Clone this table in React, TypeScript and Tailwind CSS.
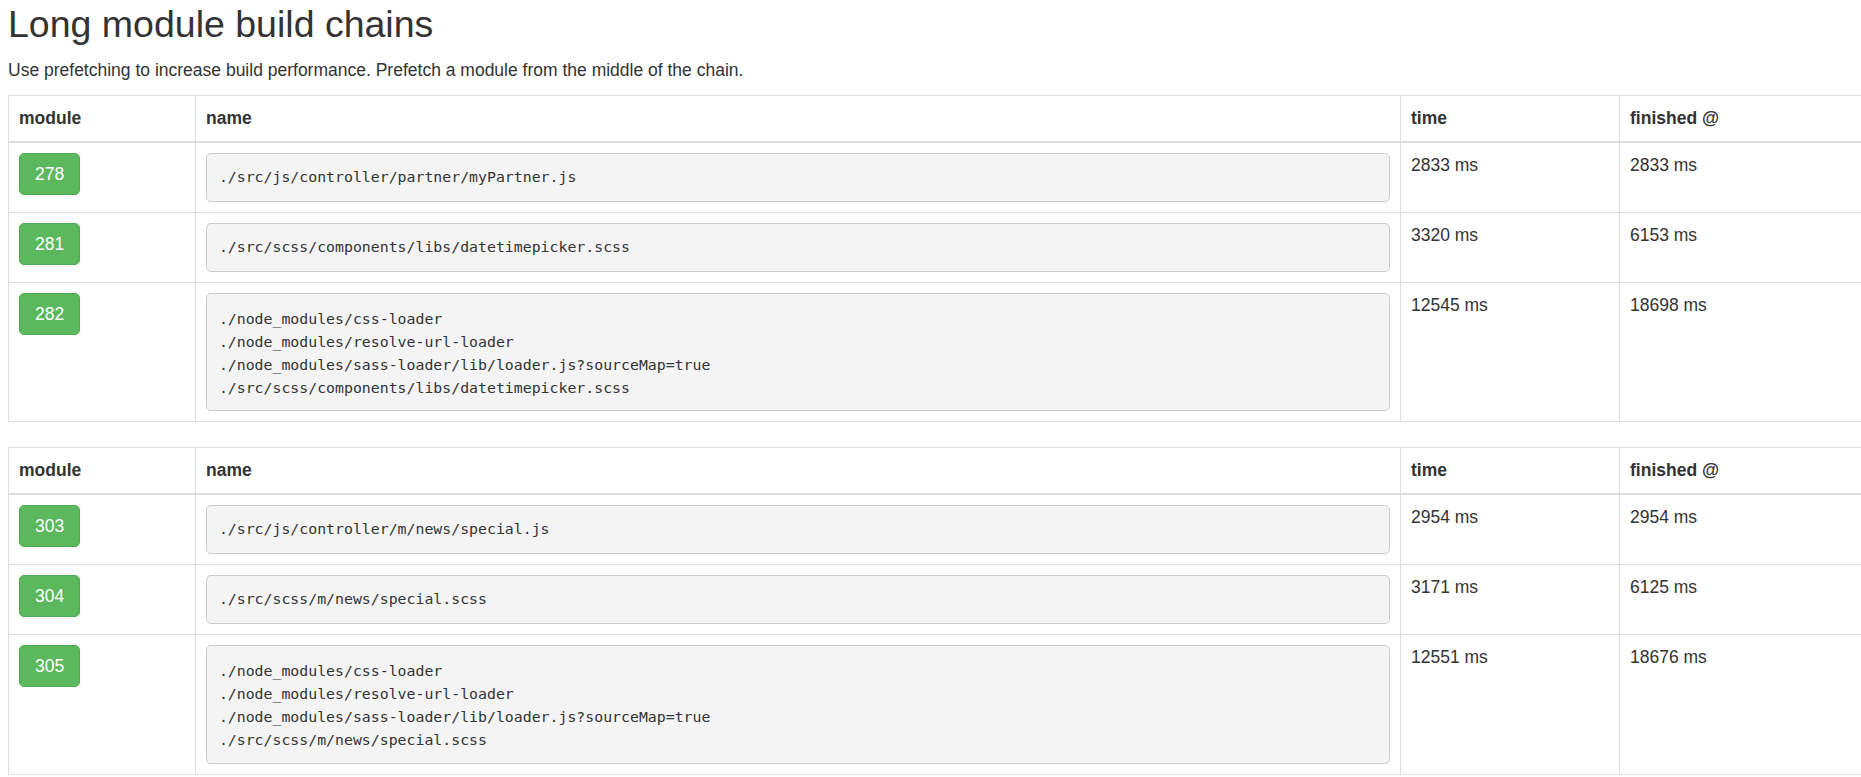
import React from "react";

type Row = { id: string; name: string[]; time: string; finished: string };

const tables: Row[][] = [
  [
    { id: "278", name: ["./src/js/controller/partner/myPartner.js"], time: "2833 ms", finished: "2833 ms" },
    { id: "281", name: ["./src/scss/components/libs/datetimepicker.scss"], time: "3320 ms", finished: "6153 ms" },
    {
      id: "282",
      name: [
        "./node_modules/css-loader",
        "./node_modules/resolve-url-loader",
        "./node_modules/sass-loader/lib/loader.js?sourceMap=true",
        "./src/scss/components/libs/datetimepicker.scss",
      ],
      time: "12545 ms",
      finished: "18698 ms",
    },
  ],
  [
    { id: "303", name: ["./src/js/controller/m/news/special.js"], time: "2954 ms", finished: "2954 ms" },
    { id: "304", name: ["./src/scss/m/news/special.scss"], time: "3171 ms", finished: "6125 ms" },
    {
      id: "305",
      name: [
        "./node_modules/css-loader",
        "./node_modules/resolve-url-loader",
        "./node_modules/sass-loader/lib/loader.js?sourceMap=true",
        "./src/scss/m/news/special.scss",
      ],
      time: "12551 ms",
      finished: "18676 ms",
    },
  ],
];

function ChainTable({ rows, last }: { rows: Row[]; last?: boolean }) {
  return (
    <table
      className={`table-fixed border-collapse border border-[#ddd] w-[1880px] ${last ? "" : "mb-[25px]"}`}
    >
      <colgroup>
        <col className="w-[187px]" />
        <col className="w-[1205px]" />
        <col className="w-[219px]" />
        <col />
      </colgroup>
      <thead>
        <tr>
          {["module", "name", "time", "finished @"].map((h) => (
            <th
              key={h}
              className="border border-[#ddd] border-b-2 p-[10px] text-left align-bottom font-bold leading-[25px]"
            >
              {h}
            </th>
          ))}
        </tr>
      </thead>
      <tbody>
        {rows.map((r) => (
          <tr key={r.id}>
            <td className="border border-[#ddd] p-[10px] align-top">
              <span className="inline-block rounded-[5px] border border-[#4cae4c] bg-[#5cb85c] px-[15px] py-[7.5px] leading-[25px] text-white">
                {r.id}
              </span>
            </td>
            <td className="border border-[#ddd] p-[10px] align-top">
              <pre
                className={`m-0 rounded-[5px] border border-[#ccc] bg-[#f4f4f4] px-[11.875px] ${r.name.length > 1 ? "pt-[13.5px] pb-[10px]" : "py-[11.875px]"} text-[14.85px] leading-[23.2px] text-[#333] whitespace-pre`}
                style={{ fontFamily: '"DejaVu Sans Mono", "Liberation Mono", monospace' }}
              >
                {r.name.join("\n")}
              </pre>
            </td>
            <td className="border border-[#ddd] p-[10px] align-top leading-[25px]">{r.time}</td>
            <td className="border border-[#ddd] p-[10px] align-top leading-[25px]">{r.finished}</td>
          </tr>
        ))}
      </tbody>
    </table>
  );
}

export default function App() {
  return (
    <div
      className="w-full overflow-hidden bg-white pl-2 pt-[4px] text-[17.5px] leading-[25px] text-[#333]"
      style={{ fontFamily: '"Liberation Sans", Arial, Helvetica, sans-serif' }}
    >
      <h2 className="mb-[12.5px] text-[37.5px] font-medium leading-[1.1]">Long module build chains</h2>
      <p className="mb-[12.5px]">
        Use prefetching to increase build performance. Prefetch a module from the middle of the chain.
      </p>
      <ChainTable rows={tables[0]} />
      <ChainTable rows={tables[1]} last />
    </div>
  );
}
